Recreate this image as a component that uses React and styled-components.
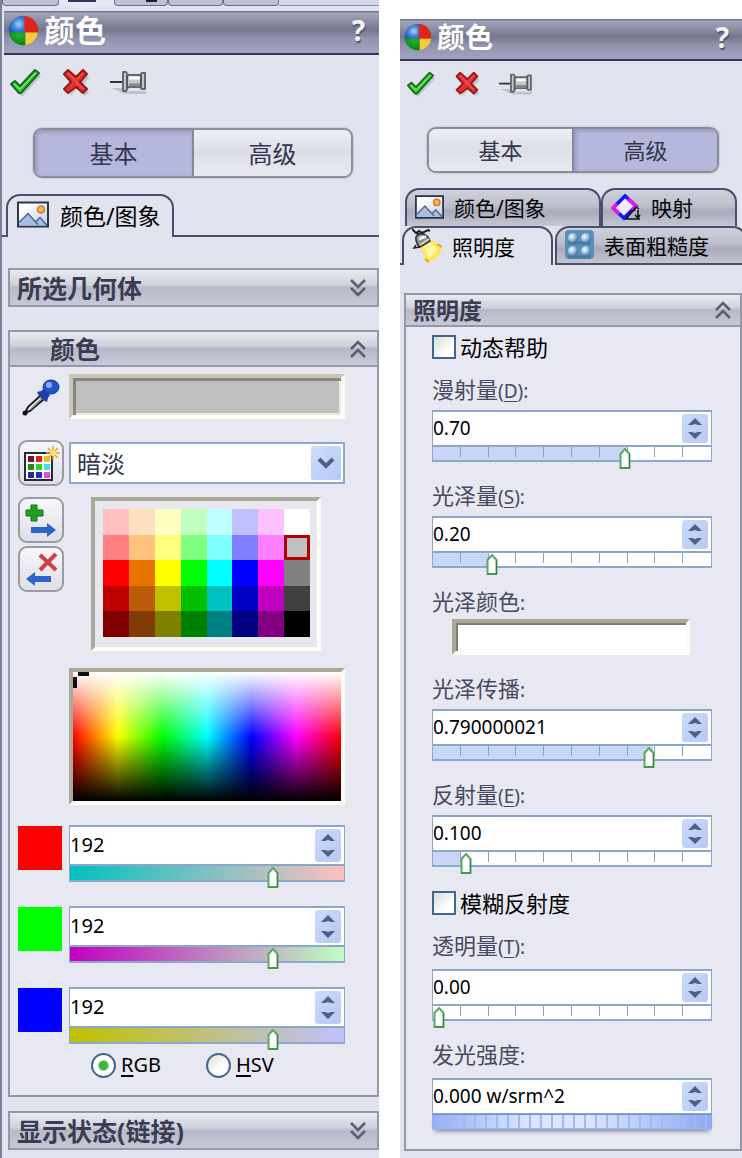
import React, { useState } from 'react';
import styled, { createGlobalStyle, css } from 'styled-components';

const PALETTE = [
  ['#ffc0c0', '#ffe0c0', '#ffffc0', '#c0ffc0', '#c0ffff', '#c0c0ff', '#ffc0ff', '#ffffff'],
  ['#ff8080', '#ffc080', '#ffff80', '#80ff80', '#80ffff', '#8080ff', '#ff80ff', '#c0c0c0'],
  ['#ff0000', '#e87400', '#ffff00', '#00ff00', '#00ffff', '#0000ff', '#ff00ff', '#808080'],
  ['#c00000', '#bc5c08', '#c0c000', '#00c000', '#00c0c0', '#0000c0', '#c000c0', '#404040'],
  ['#800000', '#803c04', '#808000', '#008000', '#008080', '#000080', '#800080', '#000000'],
];

const CHANNELS = [
  { name: 'R', color: '#ff0000', from: '#00c0c0', to: '#ffc0c0' },
  { name: 'G', color: '#00ff00', from: '#c000c0', to: '#c0ffc0' },
  { name: 'B', color: '#0000ff', from: '#c0c000', to: '#c0c0ff' },
];

const BallIcon = ({ size }) => (
  <svg width={size} height={size} viewBox="0 0 32 32" aria-hidden="true">
    <defs>
      <radialGradient id="ballBlue" cx="0.6" cy="0.5" r="0.7">
        <stop offset="0" stopColor="#a8d4fa" />
        <stop offset="0.5" stopColor="#3f82d8" />
        <stop offset="1" stopColor="#1d50b0" />
      </radialGradient>
      <radialGradient id="ballGreen" cx="0.6" cy="0.2" r="0.9">
        <stop offset="0" stopColor="#22b428" />
        <stop offset="1" stopColor="#0c7a14" />
      </radialGradient>
    </defs>
    <circle cx="16" cy="16" r="15" fill="#34466a" opacity="0.4" />
    <path d="M18 18V1A15 15 0 0 0 1 18Z" fill="url(#ballBlue)" />
    <path d="M17 18V1A15 15 0 0 1 31 18Z" fill="#e2231a" />
    <path d="M18 18H1A15 15 0 0 0 18 31Z" fill="url(#ballGreen)" />
    <path d="M18 18H31A15 15 0 0 1 18 31Z" fill="#f8cb3c" />
  </svg>
);

const CheckIcon = ({ size }) => (
  <svg width={size} height={size} viewBox="0 0 32 32" aria-hidden="true">
    <path d="M4 20L8 16L13 21L28 6L32 9L14 29H12Z" fill="#8d929e" opacity="0.4" />
    <path
      d="M2 17L6 14L11 19L26 3L30 6L12 26H10Z"
      fill="#3fce3a"
      stroke="#176b1a"
      strokeWidth="2"
      strokeLinejoin="round"
    />
    <path d="M5 17L11 22L27 6" fill="none" stroke="#8bf080" strokeWidth="1" />
  </svg>
);

const CrossIcon = ({ size }) => (
  <svg width={size} height={size} viewBox="0 0 32 32" aria-hidden="true">
    <path d="M10 6L18 13L26 6L30 11L24 18L30 25L26 29L18 22L11 29Z" fill="#8d929e" opacity="0.4" />
    <path
      d="M9 3L17 10L24 3L28 7L21 15L28 22L24 26L17 20L9 26L5 22L12 15L5 7Z"
      fill="#e23333"
      stroke="#981818"
      strokeWidth="2"
      strokeLinejoin="round"
    />
    <path d="M9 6L24 22M24 6L18 12" stroke="#f27070" strokeWidth="1" />
  </svg>
);

const PinIcon = ({ size }) => (
  <svg width={size + 6} height={size} viewBox="0 0 38 32" aria-hidden="true">
    <path d="M2 21H14V24H37V27H16Z" fill="#8d929e" opacity="0.4" />
    <path d="M1 15H13" stroke="#333" strokeWidth="2" />
    <path
      d="M14 5H17L19 8H31L33 6H36V22H33L31 20H19L17 24H14Z"
      fill="#c6c6c8"
      stroke="#66676b"
      strokeWidth="2"
      strokeLinejoin="round"
    />
    <path d="M20 11H31" stroke="#fff" strokeWidth="3" />
    <path d="M20 18H31" stroke="#85868a" strokeWidth="3" />
    <path d="M18 8V21M32 8V20" stroke="#55565a" strokeWidth="2" />
  </svg>
);

const PictureIcon = ({ size }) => (
  <svg width={size} height={size - 5} viewBox="0 0 32 26" aria-hidden="true">
    <defs>
      <linearGradient id="pictureSky" x1="0" y1="0" x2="1" y2="1">
        <stop offset="0.2" stopColor="#ffffff" />
        <stop offset="1" stopColor="#c0ccec" />
      </linearGradient>
    </defs>
    <rect x="1" y="1" width="30" height="24" fill="url(#pictureSky)" stroke="#2d3550" strokeWidth="2" />
    <path d="M2 24V21L11 12L18 20L23 16L30 23V24Z" fill="#a9bde2" />
    <path d="M2 21L11 12L21 23M19 20L23 16L30 24" fill="none" stroke="#4c6690" strokeWidth="1.5" />
    <circle cx="24" cy="8" r="3.5" fill="#f5b35e" stroke="#d8781d" strokeWidth="1.5" />
  </svg>
);

const MappingIcon = () => (
  <svg width="30" height="28" viewBox="0 0 30 28" aria-hidden="true">
    <path d="M14 3L2 15L13 25L25 13Z" fill="#eef" stroke="#1414ff" strokeWidth="3.5" />
    <path d="M17 6L25 13L21 17" fill="none" stroke="#f014e8" strokeWidth="3.5" />
    <path d="M6 11L2 15L8 21" fill="none" stroke="#f014e8" strokeWidth="3.5" />
    <path
      d="M14 26H29M15 26L25 14M27 17V25M23 18L25 14L28 16M24 22L27 25L29 22"
      fill="none"
      stroke="#111"
      strokeWidth="1.5"
    />
  </svg>
);

const LampIcon = () => (
  <svg width="30" height="35" viewBox="0 0 30 35" aria-hidden="true">
    <path d="M9 19L19 12L30 19L29 24L21 33L14 34Z" fill="#ffe75a" />
    <path d="M12 19L18 15L26 21L17 31Z" fill="#fff6a8" />
    <path d="M13 31L17 34M25 16L30 19" stroke="#e8a028" strokeWidth="2" />
    <path d="M4 12Q3 8 7 6Q12 5 16 9L18 13L8 19Q5 17 4 12Z" fill="#8c8f92" stroke="#333" strokeWidth="1.5" />
    <path d="M7 11L14 8" stroke="#f2f2f2" strokeWidth="3" />
    <path d="M8 17L17 11" stroke="#d4d6d8" strokeWidth="2" />
    <path d="M4 17L2 20L8 19" stroke="#222" strokeWidth="1.5" fill="none" />
    <path d="M0 1L4 5L7 3L10 5L16 2L18 3M9 4L13 7M5 4L7 7" stroke="#222" strokeWidth="2" fill="none" />
  </svg>
);

const RoughnessIcon = () => (
  <svg width="29" height="29" viewBox="0 0 29 29" aria-hidden="true">
    <defs>
      <radialGradient id="bump" cx="0.35" cy="0.35" r="0.7">
        <stop offset="0" stopColor="#f4faff" />
        <stop offset="0.5" stopColor="#a5c4dc" />
        <stop offset="1" stopColor="#3a6c96" />
      </radialGradient>
    </defs>
    <rect width="29" height="29" rx="4" fill="#5a8fba" />
    <path d="M3 13H26M3 27H26" stroke="#3a6c96" strokeWidth="3" opacity="0.6" />
    {[8, 21].map((x) =>
      [8, 21].map((y) => <circle key={`${x}-${y}`} cx={x} cy={y} r="5" fill="url(#bump)" />)
    )}
  </svg>
);

const EyedropperIcon = () => (
  <svg width="40" height="40" viewBox="0 0 40 40" aria-hidden="true">
    <path d="M20 18L8 29L5 35L10 33L24 21" fill="#f4f4f6" stroke="#1a1a1a" strokeWidth="2" />
    <path d="M22 20L11 31" stroke="#8f9096" strokeWidth="1.5" />
    <circle cx="5" cy="35" r="2.5" fill="#111" />
    <path d="M17 14L21 13L24 11L30 17L28 20L27 24L23 22L19 18Z" fill="#1c3fa8" />
    <ellipse cx="31" cy="9" rx="8" ry="7" fill="#1f55c4" stroke="#17378c" />
    <circle cx="29" cy="7" r="3" fill="#86b2f2" />
  </svg>
);

const SWATCH_ICON = ['#7a1018', '#e02020', '#f0c020', '#189018', '#28d828', '#40e0f0', '#2828a8', '#2828d0', '#e050e0'];

const NewSwatchIcon = () => (
  <svg width="38" height="38" viewBox="0 0 38 38" aria-hidden="true">
    <rect x="3" y="9" width="27" height="27" fill="#fff" stroke="#2a2a34" strokeWidth="2" />
    {SWATCH_ICON.map((fill, i) => (
      <rect key={fill} x={6 + (i % 3) * 8} y={12 + Math.floor(i / 3) * 8} width="6" height="6" fill={fill} />
    ))}
    <path d="M31 2V16M24 9H38M26 4L36 14M36 4L26 14" stroke="#f0a030" strokeWidth="1.5" />
    <circle cx="31" cy="9" r="3" fill="#ffe070" />
  </svg>
);

const AddSwatchIcon = () => (
  <svg width="38" height="38" viewBox="0 0 38 38" aria-hidden="true">
    <path d="M9 4H15V9H21V15H15V20H9V15H4V9H9Z" fill="#23a022" stroke="#15701a" />
    <path d="M9 26H25V22L34 29L25 36V32H9Z" fill="#2f63cc" />
  </svg>
);

const RemoveSwatchIcon = () => (
  <svg width="38" height="38" viewBox="0 0 38 38" aria-hidden="true">
    <path d="M18 5L34 20M34 4L18 20" stroke="#cf4048" strokeWidth="4" />
    <path d="M29 26H13V22L4 29L13 36V32H29Z" fill="#2f63cc" />
  </svg>
);

const ChevronsIcon = ({ up }) => (
  <svg width="16" height="20" viewBox="0 0 16 20" aria-hidden="true">
    <path
      d={up ? 'M1 10L8 3L15 10M1 18L8 11L15 18' : 'M1 2L8 9L15 2M1 10L8 17L15 10'}
      fill="none"
      stroke="#5b5e70"
      strokeWidth="2.5"
    />
  </svg>
);

const ArrowIcon = ({ up }) => (
  <svg width="14" height="9" viewBox="0 0 14 9" aria-hidden="true">
    <path d={up ? 'M0 8L7 1L14 8H10L7 7L4 8Z' : 'M0 1L7 8L14 1H10L7 2L4 1Z'} fill="#4d6185" />
  </svg>
);

const Spinner = ({ label }) => (
  <StyledSpinner>
    <StyledSpinButton type="button" aria-label={`${label} +`}>
      <ArrowIcon up />
    </StyledSpinButton>
    <StyledSpinButton type="button" aria-label={`${label} -`}>
      <ArrowIcon />
    </StyledSpinButton>
  </StyledSpinner>
);

const PanelHeader = ({ large }) => (
  <StyledHeader $large={large}>
    <BallIcon size={large ? 31 : 28} />
    <StyledTitle $large={large}>颜色</StyledTitle>
    <StyledHelpButton type="button">?</StyledHelpButton>
  </StyledHeader>
);

const Actions = ({ large }) => {
  const size = large ? 32 : 29;
  return (
    <StyledActions $large={large}>
      <StyledIconButton type="button" aria-label="确定">
        <CheckIcon size={size} />
      </StyledIconButton>
      <StyledIconButton type="button" aria-label="取消">
        <CrossIcon size={size} />
      </StyledIconButton>
      <StyledIconButton type="button" aria-label="固定">
        <PinIcon size={size} />
      </StyledIconButton>
    </StyledActions>
  );
};

const ModeSwitch = ({ large, active }) => (
  <StyledModeSwitch $large={large}>
    {['基本', '高级'].map((name) => (
      <StyledModeButton key={name} type="button" $large={large} $active={name === active}>
        {name}
      </StyledModeButton>
    ))}
  </StyledModeSwitch>
);

const SectionHeader = ({ title, large, open, indent }) => (
  <StyledSectionHeader type="button" $large={large} $open={open} $indent={indent}>
    <StyledSectionTitle $large={large}>{title}</StyledSectionTitle>
    <ChevronsIcon up={open} />
  </StyledSectionHeader>
);

const Channel = ({ channel }) => {
  const [value, setValue] = useState(192);

  return (
    <StyledRow>
      <StyledSwatch $color={channel.color} />
      <StyledSpinBox>
        <StyledEntry $large>
          <StyledInput
            $large
            aria-label={channel.name}
            value={value}
            onChange={(e) => setValue(Number(e.target.value) || 0)}
          />
          <Spinner label={channel.name} />
        </StyledEntry>
        <StyledTrack $large $from={channel.from} $to={channel.to}>
          <StyledRange
            type="range"
            min="0"
            max="255"
            aria-label={`${channel.name} 滑块`}
            value={value}
            onChange={(e) => setValue(Number(e.target.value))}
          />
        </StyledTrack>
      </StyledSpinBox>
    </StyledRow>
  );
};

const Amount = ({ id, label, mnemonic, initial, wheel, gap }) => {
  const [text, setText] = useState(initial);
  const ratio = Math.min(Math.max(parseFloat(text) || 0, 0), 1);

  return (
    <StyledField $gap={gap}>
      <StyledLabel htmlFor={id}>
        {label}
        <StyledLatin>
          {mnemonic && (
            <>
              (<u>{mnemonic}</u>)
            </>
          )}
          :
        </StyledLatin>
      </StyledLabel>
      <StyledSpinBox>
        <StyledEntry>
          <StyledInput id={id} value={text} onChange={(e) => setText(e.target.value)} />
          <Spinner label={label} />
        </StyledEntry>
        {wheel ? (
          <StyledWheel type="range" aria-label={`${label} 滚轮`} defaultValue="0" />
        ) : (
          <StyledTrack style={{ '--fill': `${ratio * 100}%` }}>
            <StyledTicks>
              {Array.from({ length: 9 }, (_, i) => (
                <StyledTick key={i} />
              ))}
            </StyledTicks>
            <StyledRange
              type="range"
              min="0"
              max="1"
              step="0.01"
              aria-label={`${label} 滑块`}
              value={ratio}
              onChange={(e) => setText(e.target.value)}
            />
          </StyledTrack>
        )}
      </StyledSpinBox>
    </StyledField>
  );
};

const BasicPanel = () => {
  const [selected, setSelected] = useState('#c0c0c0');
  const [model, setModel] = useState('RGB');

  return (
    <StyledPanel $large>
      <StyledTopTabs>
        <StyledTopTab $grow={56} />
        <StyledTopTab $grow={56} $active />
        <StyledTopTab $grow={53} $mark />
        <StyledTopTab $grow={54} />
        <StyledTopTab $grow={55} />
        <StyledTopRest />
      </StyledTopTabs>
      <PanelHeader large />
      <Actions large />
      <ModeSwitch large active="基本" />
      <StyledTabRow $height={43}>
        <StyledTabEdge $width={4} />
        <StyledTab type="button" $active $large $basis={168}>
          <PictureIcon size={32} />
          颜色/图象
        </StyledTab>
        <StyledTabEdge />
      </StyledTabRow>
      <StyledSections $large>
        <StyledSection>
          <SectionHeader large title="所选几何体" />
        </StyledSection>
        <StyledSection $top={23}>
          <SectionHeader large open indent title="颜色" />
          <StyledBasicBody>
            <StyledRow>
              <StyledTool>
                <EyedropperIcon />
              </StyledTool>
              <StyledWell type="button" aria-label="当前颜色" $color={selected} $height={45} $double />
            </StyledRow>
            <StyledRow $top={18} $center>
              <StyledToolButton type="button" aria-label="新建样块">
                <NewSwatchIcon />
              </StyledToolButton>
              <StyledSelectBox>
                <StyledSelect aria-label="样块" defaultValue="暗淡">
                  <option>暗淡</option>
                </StyledSelect>
                <StyledSelectArrow>
                  <svg width="18" height="12" viewBox="0 0 18 12" aria-hidden="true">
                    <path d="M2 2L9 9L16 2" fill="none" stroke="#4d6185" strokeWidth="4" />
                  </svg>
                </StyledSelectArrow>
              </StyledSelectBox>
            </StyledRow>
            <StyledRow $top={11}>
              <StyledTools>
                <StyledToolButton type="button" aria-label="添加颜色">
                  <AddSwatchIcon />
                </StyledToolButton>
                <StyledToolButton type="button" aria-label="移除颜色">
                  <RemoveSwatchIcon />
                </StyledToolButton>
              </StyledTools>
              <StyledPalette>
                {PALETTE.flat().map((color) => (
                  <StyledCell
                    key={color}
                    type="button"
                    aria-label={color}
                    $color={color}
                    $selected={color === selected}
                    onClick={() => setSelected(color)}
                  />
                ))}
              </StyledPalette>
            </StyledRow>
            <StyledRow $top={17} $inset>
              <StyledSpectrum>
                <svg width="18" height="18" viewBox="0 0 18 18" aria-hidden="true">
                  <path d="M5 0H16V4H5ZM0 5H4V16H0Z" fill="#06100c" />
                </svg>
              </StyledSpectrum>
            </StyledRow>
            <StyledChannels>
              {CHANNELS.map((channel) => (
                <Channel key={channel.name} channel={channel} />
              ))}
            </StyledChannels>
            <StyledRadios>
              {['RGB', 'HSV'].map((name) => (
                <StyledRadioLabel key={name}>
                  <StyledRadio
                    type="radio"
                    name="model"
                    checked={model === name}
                    onChange={() => setModel(name)}
                  />
                  <span>
                    <u>{name[0]}</u>
                    {name.slice(1)}
                  </span>
                </StyledRadioLabel>
              ))}
            </StyledRadios>
          </StyledBasicBody>
        </StyledSection>
        <StyledSection $top={14}>
          <SectionHeader large title="显示状态(链接)" />
        </StyledSection>
      </StyledSections>
    </StyledPanel>
  );
};

const AdvancedPanel = () => (
  <StyledPanel>
    <PanelHeader />
    <Actions />
    <ModeSwitch active="高级" />
    <StyledTabRow $height={38}>
      <StyledTabGap $width={5} />
      <StyledTab type="button" $basis={196}>
        <PictureIcon size={29} />
        颜色/图象
      </StyledTab>
      <StyledTab type="button" $basis={136}>
        <MappingIcon />
        映射
      </StyledTab>
    </StyledTabRow>
    <StyledTabRow $height={39}>
      <StyledTabEdge $width={2} />
      <StyledTab type="button" $active $basis={151}>
        <LampIcon />
        照明度
      </StyledTab>
      <StyledTab type="button" $last $basis={192}>
        <RoughnessIcon />
        表面粗糙度
      </StyledTab>
    </StyledTabRow>
    <StyledSections>
      <StyledSection>
        <SectionHeader open title="照明度" />
        <StyledAdvancedBody>
          <StyledCheckLabel>
            <StyledCheckbox type="checkbox" />
            动态帮助
          </StyledCheckLabel>
          <StyledGroup>
            <Amount id="diffuse" label="漫射量" mnemonic="D" initial="0.70" />
            <Amount id="specular" label="光泽量" mnemonic="S" initial="0.20" />
            <StyledField $gap={6}>
              <StyledLabel as="span">
                光泽颜色<StyledLatin>:</StyledLatin>
              </StyledLabel>
              <StyledWellInset>
                <StyledWell type="button" aria-label="光泽颜色" $color="#ffffff" $height={36} />
              </StyledWellInset>
            </StyledField>
            <Amount id="spread" label="光泽传播" initial="0.790000021" />
            <Amount id="reflect" label="反射量" mnemonic="E" initial="0.100" />
          </StyledGroup>
          <StyledCheckLabel $spaced>
            <StyledCheckbox type="checkbox" />
            模糊反射度
          </StyledCheckLabel>
          <StyledGroup>
            <Amount id="transparency" label="透明量" mnemonic="T" initial="0.00" gap={12} />
            <Amount id="luminous" label="发光强度" initial="0.000 w/srm^2" gap={12} wheel />
          </StyledGroup>
        </StyledAdvancedBody>
      </StyledSection>
    </StyledSections>
  </StyledPanel>
);

const App = () => (
  <>
    <GlobalStyle />
    <StyledPage>
      <BasicPanel />
      <AdvancedPanel />
    </StyledPage>
  </>
);

export default App;

const GlobalStyle = createGlobalStyle`
  * {
    box-sizing: border-box;
  }

  body {
    margin: 0;
    background: #ffffff;
    color: #000000;
    font-family: 'Noto Sans', 'Noto Sans CJK SC', sans-serif;
  }

  button,
  input,
  select {
    margin: 0;
    padding: 0;
    border: 0;
    border-radius: 0;
    background: none;
    color: inherit;
    font: inherit;
  }

  svg {
    display: block;
    flex: none;
  }

  u {
    text-underline-offset: 3px;
  }
`;

const StyledPage = styled.main`
  display: flex;
  gap: 21px;
  min-height: 100vh;
`;

const StyledPanel = styled.section`
  flex: ${(props) => (props.$large ? '379 1 379px' : '342 1 342px')};
  min-width: 0;
  margin-top: ${(props) => (props.$large ? '0' : '19px')};
  border-left: ${(props) => (props.$large ? '2px solid #7c7f9a' : '0')};
  background: #e1e4ee;
  overflow: hidden;
`;

const StyledTopTabs = styled.div`
  display: flex;
  height: 11px;
  padding-bottom: 5px;
`;

const StyledTopTab = styled.div`
  flex: ${(props) => props.$grow} 1 0;
  border: 1px solid #6c6f88;
  border-width: 0 1px 1px;
  border-radius: 0 0 4px 4px;
  background: ${(props) =>
    props.$mark
      ? 'linear-gradient(to right, transparent 60%, #20202c 60% 80%, transparent 80%) top / 100% 2px no-repeat #bfc2d2'
      : '#bfc2d2'};

  ${(props) =>
    props.$active &&
    css`
      border: 0;
      background: linear-gradient(to right, transparent 16%, #34365e 16% 68%, transparent 68%)
        top / 100% 2px no-repeat #e6e9f1;
    `}
`;

const StyledTopRest = styled.div`
  flex: 102 1 0;
  border-bottom: 1px solid #8d90a8;
  background: #d3dae8;
`;

const StyledHeader = styled.header`
  display: flex;
  align-items: center;
  height: ${(props) => (props.$large ? '44px' : '42px')};
  margin-left: ${(props) => (props.$large ? '2px' : '0')};
  padding: ${(props) => (props.$large ? '0 14px 4px 4px' : '0 13px 4px 4px')};
  border-bottom: 2px solid #34365a;
  background: linear-gradient(#686a86, #a2a4b8 6%, #8b8da5 25%, #75778f 45%, #9193ad 65%, #a3a3c2);
`;

const StyledTitle = styled.h1`
  flex: 1;
  margin: 0;
  padding-left: 5px;
  color: #ffffff;
  font-size: ${(props) => (props.$large ? '31px' : '28px')};
  line-height: 36px;
  font-weight: 700;
`;

const StyledHelpButton = styled.button`
  color: #f2f2f6;
  font-size: 28px;
  line-height: 36px;
  font-weight: 700;
  text-shadow: 1px 2px 1px #55576c;
`;

const StyledActions = styled.div`
  display: flex;
  gap: ${(props) => (props.$large ? '18px' : '17px')};
  padding: ${(props) => (props.$large ? '12px 7px 29px' : '9px 6px 28px')};
`;

const StyledIconButton = styled.button`
  cursor: pointer;
`;

const StyledModeSwitch = styled.div`
  display: flex;
  height: ${(props) => (props.$large ? '50px' : '46px')};
  margin: ${(props) => (props.$large ? '0 26px 16px 31px' : '0 23px 15px 27px')};
  border: 2px solid #8b8d9a;
  border-radius: 9px;
  box-shadow: 0 0 2px #9a9ca8;
  overflow: hidden;
`;

const StyledModeButton = styled.button`
  flex: 1;
  padding-bottom: 2px;
  color: #33364e;
  font-size: ${(props) => (props.$large ? '24px' : '22px')};
  background: ${(props) =>
    props.$active ? '#b6b7dc' : 'linear-gradient(#eeeff4, #dddfe8 45%, #e8e9f0)'};
  box-shadow: ${(props) => (props.$active ? 'inset 2px 2px 4px #9496b8' : 'none')};

  & + & {
    border-left: 2px solid #85879a;
  }
`;

const StyledTabRow = styled.div`
  display: flex;
  height: ${(props) => props.$height}px;
`;

const StyledTabGap = styled.div`
  flex: 0 0 ${(props) => props.$width}px;
`;

const StyledTabEdge = styled.div`
  flex: ${(props) => (props.$width ? `0 0 ${props.$width}px` : '1')};
  border-bottom: 2px solid #4b4e6c;
`;

const StyledTab = styled.button`
  display: flex;
  align-items: center;
  gap: ${(props) => (props.$large ? '11px' : '10px')};
  flex: 0 0 ${(props) => props.$basis}px;
  padding: ${(props) => (props.$large ? '0 0 4px 9px' : '0 0 2px 8px')};
  border: 2px solid #4b4e6c;
  border-bottom: 0;
  border-radius: 14px 14px 0 0;
  font-size: ${(props) => (props.$large ? '23px' : '21px')};
  white-space: nowrap;
  background: ${(props) =>
    props.$active
      ? '#e1e4ee'
      : 'linear-gradient(#cfd1db, #bcbecb 45%, #a9abbc 60%, #c4c6d3)'};

  ${(props) =>
    props.$last &&
    css`
      margin-left: 2px;
      border-bottom: 2px solid #4b4e6c;
    `}
`;

const StyledSections = styled.div`
  padding: ${(props) => (props.$large ? '31px 0 8px 6px' : '28px 0 6px 4px')};
`;

const StyledSection = styled.section`
  margin-top: ${(props) => props.$top || 0}px;
  border: 2px solid #9698a8;
  background: #e7e8f1;
`;

const StyledSectionHeader = styled.button`
  display: flex;
  align-items: center;
  justify-content: space-between;
  width: 100%;
  height: ${(props) => (props.$large ? '35px' : '32px')};
  padding-right: ${(props) => (props.$large ? '11px' : '9px')};
  padding-left: ${(props) => (props.$indent ? '40px' : '7px')};
  border-bottom: ${(props) => (props.$open ? '2px solid #9698a8' : '0')};
  background: linear-gradient(#e9ebf0, #cfd2db 42%, #b6b9c8 50%, #c6c9d6);
`;

const StyledSectionTitle = styled.span`
  color: #3a3d52;
  font-size: ${(props) => (props.$large ? '25px' : '23px')};
  line-height: 32px;
  font-weight: 700;
`;

const StyledBasicBody = styled.div`
  padding: 7px 32px 17px 8px;
`;

const StyledRow = styled.div`
  display: flex;
  align-items: ${(props) => (props.$center ? 'center' : 'flex-start')};
  gap: 5px;
  margin-top: ${(props) => props.$top || 0}px;
  padding-left: ${(props) => (props.$inset ? '51px' : '0')};
`;

const StyledChannels = styled.div`
  display: flex;
  flex-direction: column;
  gap: 24px;
  padding-top: 20px;
`;

const StyledTool = styled.div`
  flex: 0 0 46px;
  padding: 4px 2px;
`;

const StyledTools = styled.div`
  display: flex;
  flex-direction: column;
  gap: 3px;
`;

const StyledToolButton = styled.button`
  display: flex;
  align-items: center;
  justify-content: center;
  flex: 0 0 46px;
  width: 46px;
  height: 46px;
  border: 2px solid #9a9ba4;
  border-radius: 9px;
  background: linear-gradient(#f6f6fa, #dfe0e8);
`;

const sunken = css`
  border: 4px solid;
  border-color: #aca99a #fdfdf6 #fdfdf6 #aca99a;
`;

const StyledWell = styled.button`
  flex: 1;
  width: 100%;
  height: ${(props) => props.$height}px;
  ${sunken}
  background: ${(props) => props.$color};
  box-shadow: inset 2px 2px 0 #807e74;

  ${(props) =>
    props.$double &&
    css`
      border-color: #cbc6b6 #fdfdf6 #fdfdf6 #cbc6b6;
      box-shadow:
        inset 3px 3px 0 #8a8778,
        inset -2px -2px 0 #eeeadb;
    `}
`;

const StyledSelectBox = styled.div`
  position: relative;
  flex: 1;
`;

const StyledSelect = styled.select`
  appearance: none;
  width: 100%;
  height: 42px;
  padding-left: 6px;
  border: 2px solid #8ba8cb;
  background: #ffffff;
  color: #33364e;
  font-size: 24px;
`;

const StyledSelectArrow = styled.span`
  position: absolute;
  top: 4px;
  right: 4px;
  bottom: 4px;
  display: flex;
  align-items: center;
  justify-content: center;
  width: 30px;
  border-radius: 2px;
  background: linear-gradient(135deg, #cfdcfb, #b4c9f6);
  pointer-events: none;
`;

const StyledPalette = styled.div`
  display: grid;
  flex: 1;
  grid-template-columns: repeat(8, 1fr);
  grid-template-rows: repeat(5, 1fr);
  height: 154px;
  margin: 0 24px 0 22px;
  padding: 8px 7px 10px 8px;
  ${sunken}
  background: #e7e8ee;
`;

const StyledCell = styled.button`
  border: ${(props) => (props.$selected ? '3px solid #b00000' : '0')};
  background: ${(props) => props.$color};
`;

const StyledSpectrum = styled.div`
  flex: 1;
  height: 137px;
  ${sunken}
  background:
    linear-gradient(#ffffff, rgba(255, 255, 255, 0) 50%, rgba(0, 0, 0, 0) 50%, #000000),
    linear-gradient(to right, #ff0000, #ffff00, #00ff00, #00ffff, #0000ff, #ff00ff, #ff0000);
  background-clip: padding-box;
`;

const StyledSwatch = styled.div`
  flex: 0 0 44px;
  height: 44px;
  margin: 1px 2px 0 0;
  background: ${(props) => props.$color};
`;

const StyledSpinBox = styled.div`
  flex: 1;
  min-width: 0;
`;

const StyledEntry = styled.div`
  display: flex;
  align-items: center;
  height: ${(props) => (props.$large ? '40px' : '36px')};
  padding-right: 3px;
  border: 1px solid #8ba6c6;
  border-top-width: 2px;
  background: #ffffff;
`;

const StyledInput = styled.input`
  flex: 1;
  min-width: 0;
  padding-bottom: 2px;
  font-size: ${(props) => (props.$large ? '20px' : '19px')};
  outline: 0;
`;

const StyledSpinner = styled.span`
  display: flex;
  flex-direction: column;
  width: 26px;
  height: calc(100% - 4px);
  border-radius: 3px;
  background: linear-gradient(135deg, #ccd9fa, #b6c9f5);
`;

const StyledSpinButton = styled.button`
  display: flex;
  align-items: center;
  justify-content: center;
  flex: 1;
`;

const StyledTrack = styled.div`
  position: relative;
  height: ${(props) => (props.$large ? '17px' : '16px')};
  border: 1px solid #8aa9cc;
  border-bottom-width: 2px;
  background: ${(props) =>
    props.$from
      ? `linear-gradient(to right, ${props.$from}, ${props.$to})`
      : 'linear-gradient(to right, #c8d6f8 var(--fill), #ffffff var(--fill))'};
`;

const StyledTicks = styled.div`
  position: absolute;
  inset: 0 10% 3px 0;
  display: flex;
  pointer-events: none;
`;

const StyledTick = styled.span`
  flex: 1;
  border-right: 1px solid #8ba3bd;
`;

const THUMB = encodeURIComponent(
  '<svg xmlns="http://www.w3.org/2000/svg" width="12" height="22"><path d="M1.5 6L6 1L10.5 6V20H1.5Z" fill="#fff" stroke="#5ba862" stroke-width="2"/><path d="M10.5 6V20H1.5" fill="none" stroke="#2f8a3c" stroke-width="1"/></svg>'
);

const StyledRange = styled.input`
  appearance: none;
  position: relative;
  display: block;
  width: 100%;
  height: 100%;

  &::-webkit-slider-runnable-track {
    height: 14px;
  }

  &::-webkit-slider-thumb {
    appearance: none;
    width: 12px;
    height: 22px;
    margin-top: 1px;
    background: url("data:image/svg+xml,${THUMB}") no-repeat;
  }
`;

const StyledWheel = styled.input`
  appearance: none;
  display: block;
  width: 100%;
  height: 16px;
  border-top: 1px solid #6f8fce;
  background:
    repeating-linear-gradient(to right, transparent 0 9px, #a3b9f2 9px 11px),
    linear-gradient(to right, #96aff2, #dbe6ff 35%, #dbe6ff 55%, #8ea9f0);
  box-shadow:
    inset 0 -2px 0 #9bb3ee,
    0 4px 4px -3px #70748a;

  &::-webkit-slider-thumb {
    appearance: none;
    width: 1px;
    height: 1px;
  }
`;

const StyledRadios = styled.div`
  display: flex;
  gap: 45px;
  padding: 8px 0 0 73px;
`;

const StyledRadioLabel = styled.label`
  display: flex;
  align-items: center;
  gap: 5px;
  font-size: 20px;
  line-height: 26px;
`;

const StyledRadio = styled.input`
  appearance: none;
  width: 25px;
  height: 25px;
  border: 2px solid #40688e;
  border-radius: 50%;
  background: linear-gradient(135deg, #dcdcd6, #ffffff 60%);

  &:checked {
    background: radial-gradient(circle, #3fb53c 0 4px, #ffffff 6px);
  }
`;

const StyledAdvancedBody = styled.div`
  padding: 8px 28px 19px 26px;
`;

const StyledGroup = styled.div`
  display: flex;
  flex-direction: column;
  gap: 21px;
  padding-top: 18px;
`;

const StyledCheckLabel = styled.label`
  display: flex;
  align-items: center;
  gap: 4px;
  margin-top: ${(props) => (props.$spaced ? '24px' : '0')};
  font-size: 22px;
  line-height: 24px;
`;

const StyledCheckbox = styled.input`
  appearance: none;
  width: 24px;
  height: 24px;
  border: 2px solid #40688e;
  background: linear-gradient(135deg, #dcdcd6, #ffffff 70%);

  &:checked {
    background: #3fb53c;
  }
`;

const StyledField = styled.div`
  display: flex;
  flex-direction: column;
  gap: ${(props) => props.$gap || 9}px;
`;

const StyledLabel = styled.label`
  height: 24px;
  color: #474a5e;
  font-size: 22px;
  line-height: 24px;
`;

const StyledLatin = styled.span`
  font-size: 19px;
`;

const StyledWellInset = styled.div`
  display: flex;
  padding: 0 22px 0 20px;
`;
